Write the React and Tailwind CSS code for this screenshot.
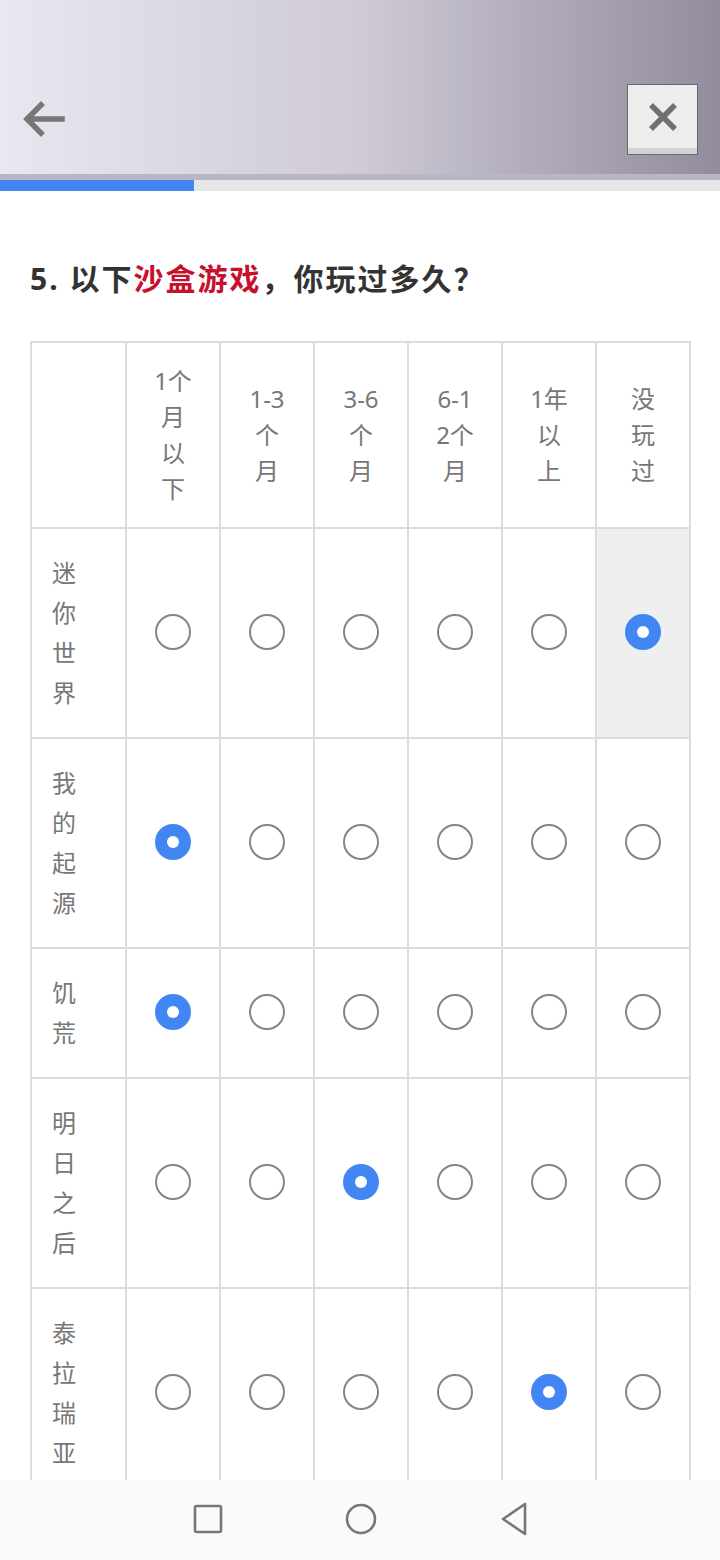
import React from "react";

const cols = [
  ["1个", "月", "以", "下"],
  ["1-3", "个", "月"],
  ["3-6", "个", "月"],
  ["6-1", "2个", "月"],
  ["1年", "以", "上"],
  ["没", "玩", "过"],
];

const rows = [
  { name: ["迷", "你", "世", "界"], pick: 5 },
  { name: ["我", "的", "起", "源"], pick: 0 },
  { name: ["饥", "荒"], pick: 0 },
  { name: ["明", "日", "之", "后"], pick: 2 },
  { name: ["泰", "拉", "瑞", "亚"], pick: 4 },
];

const Radio = ({ on }) =>
  on ? (
    <div className="w-[36px] h-[36px] rounded-full bg-[#4286f4] flex items-center justify-center mx-auto mb-[3px]">
      <div className="w-[12px] h-[12px] rounded-full bg-white" />
    </div>
  ) : (
    <div className="w-[36px] h-[36px] rounded-full border-2 border-[#858585] bg-white mx-auto mb-[3px]" />
  );

const App = () => {
  return (
    <div
      className="w-[720px] h-[1560px] flex flex-col bg-white overflow-hidden"
      style={{ fontFamily: '"Noto Sans", "Noto Sans CJK SC", sans-serif' }}
    >
      {/* top bar */}
      <div className="h-[174px] shrink-0 bg-gradient-to-r from-[#e9e7ef] via-[#cfcad6] to-[#928c9c] flex items-end justify-between pb-[19px] pl-[20px] pr-[22px]">
        <svg width="46" height="40" viewBox="0 0 46 40" className="mb-[16px]">
          <path d="M42 20 H9 M21 6 L7 20 L21 34" fill="none" stroke="#777" strokeWidth="5.5" strokeLinecap="square" />
        </svg>
        <div className="w-[71px] h-[71px] bg-[#ededed] border border-[#6a6a6a] flex flex-col">
          <div className="flex-1 flex items-center justify-center">
            <svg width="32" height="32" viewBox="0 0 32 32">
              <path d="M4 4 L28 28 M28 4 L4 28" stroke="#707070" strokeWidth="5.5" />
            </svg>
          </div>
          <div className="h-[6px] bg-[#d2d2d2]" />
        </div>
      </div>
      <div className="h-[6px] shrink-0 bg-[#b9b7c6]" />
      <div className="h-[11px] shrink-0 bg-[#e6e6e6] flex">
        <div className="w-[194px] bg-[#4286f4]" />
      </div>

      {/* content */}
      <div className="flex-1 overflow-hidden px-[30px]">
        <h1 className="mt-[68px] text-[30px] tracking-[2px] font-bold text-[#333] leading-[40px]">
          5. 以下<span className="text-[#c8102e]">沙盒游戏</span>，你玩过多久？
        </h1>

        <table className="mt-[42px] w-[660px] table-fixed border-collapse">
          <colgroup>
            <col className="w-[95px]" />
            {cols.map((_, i) => (
              <col key={i} className="w-[94px]" />
            ))}
          </colgroup>
          <thead>
            <tr className="h-[186px]">
              <th className="border-2 border-[#dcdcdc]" />
              {cols.map((c, i) => (
                <th key={i} className="border-2 border-[#dcdcdc] font-normal text-[24px] leading-[36px] text-[#777] text-center align-middle">
                  {c.map((l, j) => (
                    <div key={j}>{l}</div>
                  ))}
                </th>
              ))}
            </tr>
          </thead>
          <tbody>
            {rows.map((r, ri) => (
              <tr key={ri}>
                <td className="border-2 border-[#dcdcdc] pl-[20px] py-[24px] text-[24px] leading-[40px] text-[#777] align-middle">
                  {r.name.map((l, j) => (
                    <div key={j}>{l}</div>
                  ))}
                </td>
                {cols.map((_, ci) => (
                  <td
                    key={ci}
                    className={`border-2 border-[#dcdcdc] align-middle ${ri === 0 && ci === 5 ? "bg-[#efefef]" : ""}`}
                  >
                    <Radio on={r.pick === ci} />
                  </td>
                ))}
              </tr>
            ))}
          </tbody>
        </table>
      </div>

      {/* nav */}
      <div className="h-[80px] shrink-0 bg-[#fafafa] flex items-center justify-center gap-[93px] pb-[2px] pl-[2px]">
        <div className="w-[60px] flex justify-center">
          <svg width="30" height="30" viewBox="0 0 30 30">
            <rect x="2" y="2" width="26" height="26" rx="1.5" fill="none" stroke="#777" strokeWidth="2.6" />
          </svg>
        </div>
        <div className="w-[60px] flex justify-center">
          <svg width="32" height="32" viewBox="0 0 32 32">
            <circle cx="16" cy="16" r="14" fill="none" stroke="#777" strokeWidth="2.6" />
          </svg>
        </div>
        <div className="w-[60px] flex justify-center">
          <svg width="30" height="34" viewBox="0 0 30 34">
            <path d="M26 2 L4 17 L26 32 Z" fill="none" stroke="#777" strokeWidth="2.6" strokeLinejoin="round" />
          </svg>
        </div>
      </div>
    </div>
  );
};

export default App;
